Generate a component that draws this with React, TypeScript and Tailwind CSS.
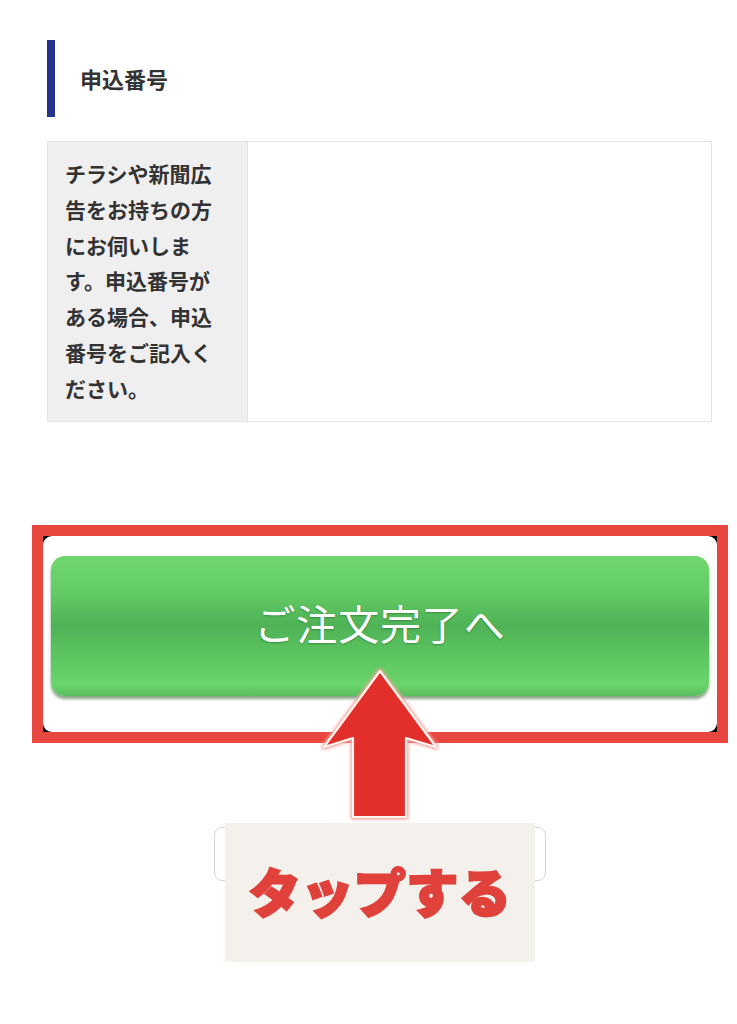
const jp = "font-['Noto_Sans_CJK_JP','Noto_Sans',sans-serif]";

const noteLines = [
  "チラシや新聞広",
  "告をお持ちの方",
  "にお伺いしま",
  "す。申込番号が",
  "ある場合、申込",
  "番号をご記入く",
  "ださい。",
];

function UpArrow() {
  return (
    <svg
      width="120"
      height="156"
      viewBox="0 0 120 156"
      className="absolute left-[320px] top-[666px]"
    >
      <defs>
        <filter id="glow" x="-20%" y="-20%" width="140%" height="140%">
          <feGaussianBlur stdDeviation="1.6" />
        </filter>
      </defs>
      <path
        d="M60 5 L116 81 L86 72 L86 151 L33 151 L33 72 L4 81 Z"
        fill="none"
        stroke="#f3a29b"
        strokeWidth="5"
        strokeLinejoin="round"
        filter="url(#glow)"
      />
      <path
        d="M60 5 L116 81 L86 72 L86 151 L33 151 L33 72 L4 81 Z"
        fill="#e22f2b"
        stroke="#fff5ef"
        strokeWidth="2.2"
        strokeLinejoin="round"
      />
    </svg>
  );
}

export default function App() {
  return (
    <div className={`relative min-h-[1024px] w-[737px] bg-white pt-[40px] pb-[80px] ${jp}`}>
      {/* section title */}
      <div className="ml-[47px] flex h-[77px] items-center border-l-[8px] border-[#25338c] pl-[25px]">
        <h2 className="text-[22px] font-bold text-[#333]">申込番号</h2>
      </div>

      {/* form row */}
      <div className="ml-[47px] mt-[24px] flex w-[665px] border border-[#e3e3e3]">
        <div className="w-[200px] border-r border-[#e3e3e3] bg-[#efefef] pl-[17px] pt-[14px] pb-[14px]">
          {noteLines.map((line) => (
            <p key={line} className="text-[21px] font-bold leading-[35.8px] text-[#333] whitespace-nowrap">
              {line}
            </p>
          ))}
        </div>
        <div className="flex-1 bg-white" />
      </div>

      {/* highlighted button */}
      <div className="ml-[32px] mt-[103px] h-[218px] w-[696px] border-[11px] border-[#e8473f] bg-black">
        <div className="h-full rounded-[9px] bg-white px-[8px] pt-[20px]">
          <button className="flex h-[140px] w-full items-center justify-center rounded-[14px] bg-[linear-gradient(to_bottom,#6fd76d_0%,#63cc64_25%,#4fb257_50%,#5cc660_72%,#6ad56b_92%,#5bbd5e_100%)] shadow-[0_3px_3px_rgba(40,90,40,0.55)]">
            <span className="pb-[6px] text-[41px] font-normal tracking-[0.02em] text-white [text-shadow:0_1px_2px_rgba(0,60,0,0.35)]">
              ご注文完了へ
            </span>
          </button>
        </div>
      </div>

      {/* partially hidden control below */}
      <div className="ml-[214px] mt-[84px] h-[54px] w-[332px] rounded-lg border border-[#d6d6d6] bg-white" />

      <UpArrow />

      {/* annotation label */}
      <div className="absolute left-[225px] top-[823px] flex h-[139px] w-[310px] items-center justify-center bg-[#f4f0ec]">
        <span className="pb-[4px] text-[52px] font-black tracking-[0.01em] text-[#e0413b] [-webkit-text-stroke:2.5px_#e0413b]">
          タップする
        </span>
      </div>
    </div>
  );
}
